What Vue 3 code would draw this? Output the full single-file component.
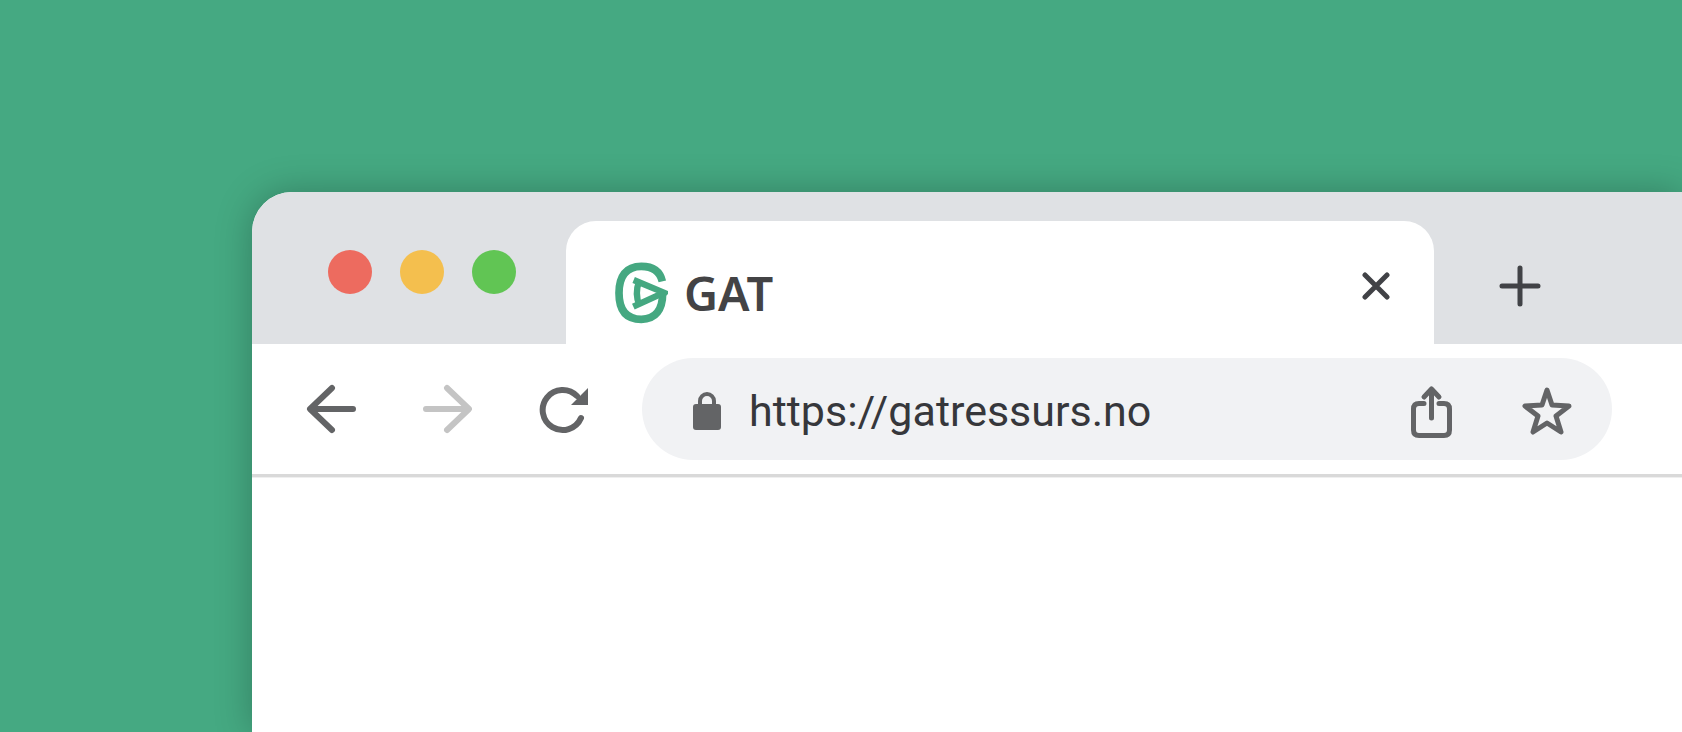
<script setup>
import { ref } from 'vue'

const address = ref('https://gatressurs.no')
const lights = [
  { name: 'Close window', tone: 'red' },
  { name: 'Minimize window', tone: 'yellow' },
  { name: 'Zoom window', tone: 'green' },
]
</script>

<template>
  <div class="desktop">
    <main class="window">
      <header class="tab-strip">
        <div class="lights">
          <button
            v-for="light in lights"
            :key="light.tone"
            type="button"
            class="light"
            :class="light.tone"
            :aria-label="light.name"
          ></button>
        </div>

        <div class="tab">
          <svg class="logo" viewBox="0 0 162 186" aria-hidden="true">
            <g fill="none" stroke="#45a881">
              <path stroke-width="23" d="M145 58C138 28 118 13 82 13C36 13 15 43 15 93C15 145 37 172 82 172C125 172 146 143 146 94" />
              <path stroke-width="19" d="M59 54L150 92L58 134" />
              <path stroke-width="19" d="M75 58C67 80 67 108 76 130" />
              <path fill="#45a881" stroke="none" d="M130 78L159 89V100L130 106Z" />
            </g>
          </svg>
          <span class="tab-title">GAT</span>
          <button type="button" class="icon-button tab-close" aria-label="Close tab">
            <svg width="28" height="28" viewBox="0 0 28 28">
              <path class="ink" d="M3 3L25 25M25 3L3 25" />
            </svg>
          </button>
        </div>

        <button type="button" class="icon-button" aria-label="New tab">
          <svg width="42" height="42" viewBox="0 0 42 42">
            <path class="ink" d="M21 3V39M3 21H39" />
          </svg>
        </button>
      </header>

      <nav class="toolbar">
        <div class="history">
          <button type="button" class="icon-button" aria-label="Back">
            <svg width="50" height="50" viewBox="0 0 50 50">
              <path class="line" d="M26 4L4 25L26 46M5 25H47" />
            </svg>
          </button>
          <button type="button" class="icon-button faded" aria-label="Forward">
            <svg width="50" height="50" viewBox="0 0 50 50">
              <path class="line" d="M25 4L47 25L25 46M46 25H4" />
            </svg>
          </button>
          <button type="button" class="icon-button" aria-label="Reload">
            <svg width="50" height="50" viewBox="0 0 50 50">
              <path class="line" d="M43 34A20 20 0 1 1 39 12" />
              <path class="solid" d="M50 4V21H33Z" />
            </svg>
          </button>
        </div>

        <form class="address" @submit.prevent>
          <svg class="lock" width="30" height="40" viewBox="0 0 30 40" aria-hidden="true">
            <rect class="solid" x="1" y="13" width="28" height="26" rx="3" />
            <path class="shackle" d="M8 15V10A7 7 0 0 1 22 10V15" />
          </svg>
          <input v-model="address" class="url" type="text" aria-label="Address" spellcheck="false" />
          <button type="button" class="icon-button" aria-label="Share">
            <svg width="42" height="52" viewBox="0 0 42 52">
              <path class="line thin" d="M13 18.5H8Q2.5 18.5 2.5 24V45Q2.5 50.5 8 50.5H33Q38.500 50.500 38.500 45V24Q38.500 18.500 33 18.500H28M20.500 33V5M13 12L20.500 4L28 12" />
            </svg>
          </button>
          <button type="button" class="icon-button" aria-label="Bookmark">
            <svg width="50" height="50" viewBox="0 0 50 50">
              <path class="line thin" d="M25 4L30 19L47 20L34 30L39 46L25 37L11 46L16 30L3 20L20 19Z" />
            </svg>
          </button>
        </form>
      </nav>

      <section class="page"></section>
    </main>
  </div>
</template>

<style>
body {
  margin: 0;
  background: #45a982;
}
</style>

<style scoped>
.desktop {
  box-sizing: border-box;
  display: flex;
  min-height: 100vh;
  padding: 192px 0 0 252px;
  overflow: hidden;
  background: #45a982;
  font-family: Roboto, "Liberation Sans", sans-serif;
}

.window {
  flex: 1;
  display: flex;
  flex-direction: column;
  min-width: 0;
  border-top-left-radius: 40px;
  background: #fff;
  box-shadow: 0 0 36px rgba(0, 0, 0, 0.25);
}

.tab-strip {
  display: flex;
  align-items: flex-end;
  height: 152px;
  padding: 0 141px 0 76px;
  box-sizing: border-box;
  border-top-left-radius: 40px;
  background: #dfe1e4;
}

.tab-strip > .icon-button {
  margin: 0 0 37px 65px;
}

.lights {
  display: flex;
  gap: 28px;
  margin-bottom: 50px;
}

.light {
  width: 44px;
  height: 44px;
  padding: 0;
  border: 0;
  border-radius: 50%;
}

.red {
  background: #ed6b5f;
}

.yellow {
  background: #f4bf4e;
}

.green {
  background: #61c554;
}

.tab {
  flex: 1;
  display: flex;
  align-items: center;
  height: 123px;
  margin-left: 50px;
  padding: 0 44px 0 48px;
  box-sizing: border-box;
  border-radius: 30px 30px 0 0;
  background: #fff;
}

.logo {
  width: 54px;
  height: 62px;
  margin-top: 20px;
}

.tab-title {
  flex: 1;
  margin: 20px 0 0 16px;
  color: #434345;
  font: 600 47px/62px "Noto Sans", "Open Sans", sans-serif;
}

.tab-close {
  margin-top: 7px;
}

.icon-button {
  display: block;
  flex: none;
  padding: 0;
  border: 0;
  background: none;
  color: #636466;
}

.icon-button svg {
  display: block;
}

.faded {
  color: #c4c4c4;
}

.ink,
.line,
.shackle {
  fill: none;
  stroke: currentColor;
  stroke-width: 5;
  stroke-linecap: round;
  stroke-linejoin: round;
}

.line {
  stroke-width: 6;
}

.thin {
  stroke-width: 5;
}

.ink {
  stroke: #414246;
}

.shackle {
  stroke-width: 4;
}

.solid {
  fill: currentColor;
}

.toolbar {
  display: flex;
  align-items: center;
  height: 130px;
  padding: 0 70px 0 54px;
  border-bottom: 3px solid #d9d9d9;
  box-shadow: 0 1px #efefef;
}

.history {
  display: flex;
  gap: 66px;
}

.address {
  flex: 1;
  display: flex;
  align-items: center;
  height: 102px;
  margin-left: 54px;
  padding: 4px 40px 0 50px;
  box-sizing: border-box;
  border-radius: 51px;
  background: #f1f2f4;
}

.lock {
  flex: none;
  color: #636466;
}

.url {
  flex: 1;
  min-width: 0;
  height: 60px;
  margin: 0 24px 0 27px;
  padding: 0;
  border: 0;
  outline: 0;
  background: none;
  color: #36373b;
  font: 400 43px/60px Roboto, "Liberation Sans", sans-serif;
}

.address .icon-button svg {
  overflow: visible;
}

.address .icon-button + .icon-button {
  margin-left: 69px;
}

.page {
  flex: 1;
}
</style>
